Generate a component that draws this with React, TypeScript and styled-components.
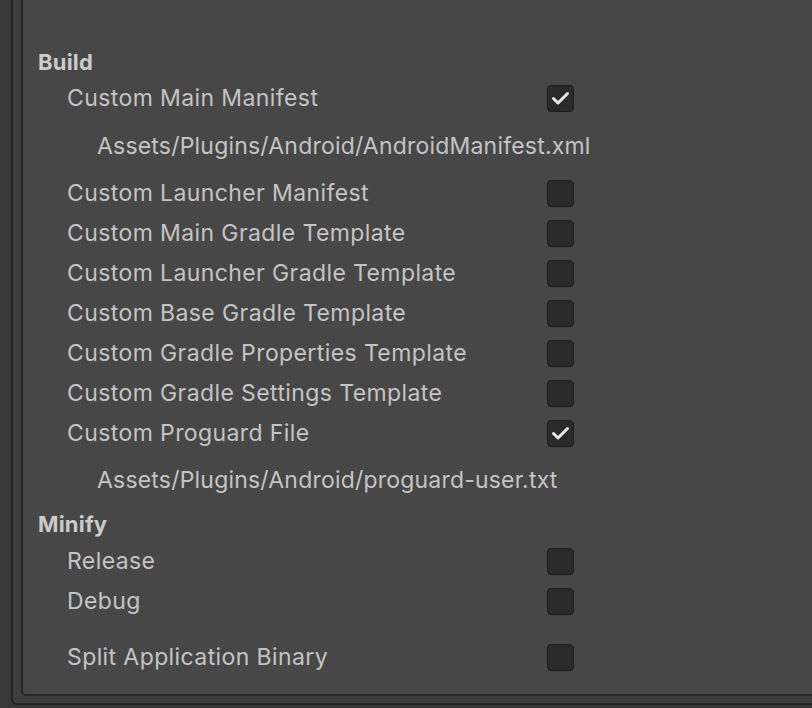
import React from "react";
import styled, { createGlobalStyle } from "styled-components";

const GlobalStyle = createGlobalStyle`
  html, body {
    margin: 0;
    padding: 0;
    background: #383838;
    overflow: hidden;
  }
  body {
    font-family: Inter, "Noto Sans", "Liberation Sans", sans-serif;
  }
`;

const Page = styled.div`
  height: 708px;
  box-sizing: border-box;
  padding: 0 0 3px 11px;
  display: flex;
  flex-direction: column;
`;

const OuterPanel = styled.div`
  flex: 1;
  display: flex;
  flex-direction: column;
  margin-right: -40px;
  background: #3e3e3e;
  border: 2px solid #232323;
  border-top: none;
  border-radius: 0 0 0 6px;
  padding: 0 0 7px 8px;
`;

const InnerPanel = styled.div`
  flex: 1;
  display: flex;
  flex-direction: column;
  background: #474747;
  border: 2px solid #262626;
  border-top: none;
  border-radius: 0 0 0 5px;
  padding: 46px 0 17px 15px;
  color: #c8c8c8;
`;

const Header = styled.div<{ $height: number }>`
  height: ${(p) => p.$height}px;
  display: flex;
  align-items: center;
  font-size: 22px;
  font-weight: 700;
  letter-spacing: 0.2px;
  color: #cbcbcb;
`;

const Row = styled.div<{ $gap?: number }>`
  height: 40px;
  margin-top: ${(p) => p.$gap ?? 0}px;
  display: flex;
  align-items: center;
  padding-left: 29px;
`;

const Label = styled.span`
  width: 480px;
  font-size: 23px;
  letter-spacing: 0.4px;
  color: #c4c4c4;
  white-space: nowrap;
`;

const PathLine = styled.div<{ $height: number }>`
  height: ${(p) => p.$height}px;
  display: flex;
  align-items: center;
  padding-left: 59px;
  font-size: 23px;
  letter-spacing: 0.2px;
  color: #c4c4c4;
  white-space: nowrap;
`;

const Box = styled.div`
  width: 27px;
  height: 27px;
  box-sizing: border-box;
  border-radius: 4px;
  background: #2a2a2a;
  border: 1px solid #1d1d1d;
  display: flex;
  align-items: center;
  justify-content: center;
`;

const Check = () => (
  <svg width="19" height="15" viewBox="0 0 19 15">
    <polyline
      points="2.5,7.5 7,12 16.5,2.5"
      fill="none"
      stroke="#e8e8e8"
      strokeWidth="3"
      strokeLinecap="round"
      strokeLinejoin="round"
    />
  </svg>
);

const Toggle = ({ label, checked, gap }: { label: string; checked?: boolean; gap?: number }) => (
  <Row $gap={gap}>
    <Label>{label}</Label>
    <Box>{checked && <Check />}</Box>
  </Row>
);

export default function App() {
  return (
    <>
      <GlobalStyle />
      <Page>
        <OuterPanel>
          <InnerPanel>
            <Header $height={32}>Build</Header>
            <Toggle label="Custom Main Manifest" checked />
            <PathLine $height={55}>Assets/Plugins/Android/AndroidManifest.xml</PathLine>
            <Toggle label="Custom Launcher Manifest" />
            <Toggle label="Custom Main Gradle Template" />
            <Toggle label="Custom Launcher Gradle Template" />
            <Toggle label="Custom Base Gradle Template" />
            <Toggle label="Custom Gradle Properties Template" />
            <Toggle label="Custom Gradle Settings Template" />
            <Toggle label="Custom Proguard File" checked />
            <PathLine $height={54}>Assets/Plugins/Android/proguard-user.txt</PathLine>
            <Header $height={34}>Minify</Header>
            <Toggle label="Release" />
            <Toggle label="Debug" />
            <Toggle label="Split Application Binary" gap={16} />
          </InnerPanel>
        </OuterPanel>
      </Page>
    </>
  );
}
